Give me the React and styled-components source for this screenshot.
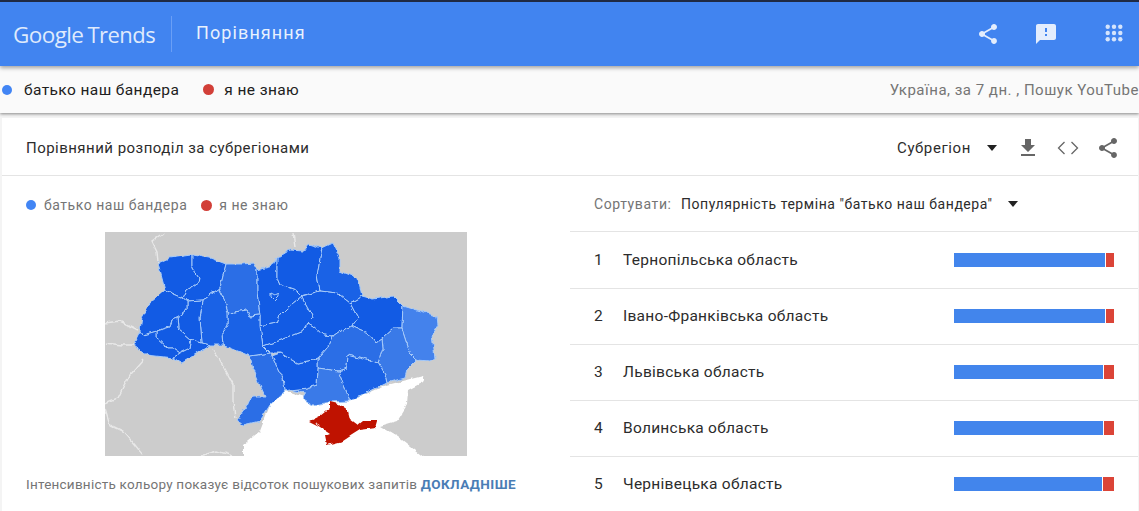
import React from "react";
import styled, { createGlobalStyle } from "styled-components";

const Global = createGlobalStyle`
  html, body { margin: 0; padding: 0; height: 511px; overflow: hidden; background: #f4f4f4; }
  body { font-family: Roboto, "Liberation Sans", sans-serif; }
`;

const Page = styled.div`
  width: 1139px;
  height: 511px;
  overflow: hidden;
  display: flex;
  flex-direction: column;
`;

const Header = styled.header`
  height: 64px;
  flex: none;
  border-top: 2px solid #1f2a44;
  background: #4184f0;
  display: flex;
  align-items: center;
  color: #e8f1fd;
  box-shadow: 0 2px 4px rgba(0, 0, 0, 0.35);
  position: relative;
  z-index: 2;
`;

const Logo = styled.div`
  width: 172px;
  height: 36px;
  flex: none;
  box-sizing: border-box;
  padding-left: 13px;
  display: flex;
  align-items: center;
  gap: 4px;
  border-right: 1px solid #6a9ff6;
  font-family: "Open Sans", sans-serif;
  font-size: 22.5px;
  letter-spacing: -0.6px;
  color: #dfeafc;
`;

const LogoTrends = styled.span`
  font-size: 22px;
  letter-spacing: -0.5px;
`;

const PageTitle = styled.div`
  margin-left: 24px;
  font-size: 18px;
  letter-spacing: 1.1px;
  flex: 1;
  margin-top: -3px;
`;

const HeaderIcons = styled.div`
  display: flex;
  align-items: center;
  margin-right: 13px;
  gap: 34px;
`;

const AppsSvg = styled.svg`
  margin-left: 10px;
  margin-top: -2px;
`;

const SubBar = styled.div`
  height: 47px;
  flex: none;
  box-sizing: border-box;
  background: #fafafa;
  display: flex;
  align-items: center;
  justify-content: space-between;
  box-shadow: 0 1px 3px rgba(0, 0, 0, 0.45);
  position: relative;
  z-index: 1;
  white-space: nowrap;
`;

const Terms = styled.div`
  display: flex;
  align-items: center;
  padding-left: 2px;
`;

const Dot = styled.span`
  width: ${(p) => p.$size}px;
  height: ${(p) => p.$size}px;
  flex: none;
  border-radius: 50%;
  background: ${(p) => (p.$red ? "#d23f38" : "#4285f4")};
  margin-right: ${(p) => p.$gap}px;
`;

const TermText = styled.span`
  font-size: 15.5px;
  color: #202020;
  letter-spacing: 0.4px;
  margin-right: ${(p) => p.$after}px;
`;

const Scope = styled.div`
  font-size: 15px;
  color: #757575;
  letter-spacing: 0.5px;
`;

const Card = styled.section`
  margin: 5px 1px 0 2px;
  flex: 1;
  background: #fff;
  min-height: 0;
  display: flex;
  flex-direction: column;
`;

const CardHead = styled.div`
  height: 58px;
  flex: none;
  box-sizing: border-box;
  border-bottom: 1px solid #e4e4e4;
  display: flex;
  align-items: center;
  padding: 3px 18px 0 24px;
`;

const CardTitle = styled.div`
  flex: 1;
  font-size: 15px;
  color: #2c2c2c;
  letter-spacing: 0.47px;
`;

const RegionLabel = styled.div`
  font-size: 15px;
  color: #2c2c2c;
  letter-spacing: 0.6px;
  margin-right: 16px;
`;

const Caret = styled.span`
  width: 0;
  height: 0;
  flex: none;
  border-left: 5.5px solid transparent;
  border-right: 5.5px solid transparent;
  border-top: 6px solid #222;
`;

const CardTools = styled.div`
  display: flex;
  align-items: center;
  margin-left: 19px;
  gap: 16px;
`;

const Body = styled.div`
  flex: 1;
  display: flex;
  min-height: 0;
`;

const Left = styled.div`
  width: 568px;
  flex: none;
  display: flex;
  flex-direction: column;
`;

const Legend = styled.div`
  display: flex;
  align-items: center;
  height: 56px;
  box-sizing: border-box;
  flex: none;
  padding: 2px 0 0 24px;
`;

const LegendText = styled.span`
  font-size: 14px;
  color: #757575;
  letter-spacing: 0.53px;
  margin-right: ${(p) => p.$after}px;
`;

const MapBox = styled.div`
  width: 362px;
  height: 224px;
  margin-left: 103px;
  flex: none;
`;

const Note = styled.div`
  margin: 20px 0 0 24px;
  font-size: 13.5px;
  color: #757575;
  letter-spacing: 0.24px;
  white-space: nowrap;
`;

const More = styled.span`
  color: #4a7db5;
  font-weight: 700;
  letter-spacing: 0.44px;
`;

const Right = styled.div`
  flex: 1;
  display: flex;
  flex-direction: column;
`;

const Sort = styled.div`
  height: 56px;
  flex: none;
  display: flex;
  align-items: center;
  padding: 1px 0 0 24px;
  box-sizing: border-box;
  border-bottom: 1px solid #e4e4e4;
`;

const SortLabel = styled.span`
  font-size: 14px;
  color: #757575;
  letter-spacing: 0.6px;
  width: 87px;
`;

const SortValue = styled.span`
  font-size: 14px;
  color: #2c2c2c;
  letter-spacing: 0.54px;
  margin-right: 16px;
`;

const Rows = styled.div`
  display: flex;
  flex-direction: column;
`;

const Row = styled.div`
  height: 56px;
  flex: none;
  box-sizing: border-box;
  display: flex;
  align-items: center;
  padding: 0 0 1px 24px;
  border-bottom: 1px solid #e4e4e4;
  &:first-child {
    height: 57px;
    padding-bottom: 0;
  }
`;

const Rank = styled.span`
  width: 29px;
  font-size: 15.5px;
  color: #2c2c2c;
`;

const RowName = styled.span`
  flex: 1;
  font-size: 15.5px;
  color: #2c2c2c;
  letter-spacing: 0.27px;
`;

const Bar = styled.div`
  width: 160px;
  height: 14px;
  margin-right: 24px;
  flex: none;
  display: flex;
  gap: 1px;
`;

const BarPart = styled.div`
  background: ${(p) => (p.$red ? "#db4437" : "#4285ec")};
`;

const Ic = ({ d, size = 24, fill }) => (
  <svg width={size} height={size} viewBox="0 0 24 24" fill={fill}>
    <path d={d} />
  </svg>
);

const SHARE =
  "M18 16.08c-.76 0-1.44.3-1.96.77L8.91 12.7c.05-.23.09-.46.09-.7s-.04-.47-.09-.7l7.05-4.11c.54.5 1.25.81 2.04.81 1.66 0 3-1.34 3-3s-1.34-3-3-3-3 1.34-3 3c0 .24.04.47.09.7L8.04 9.81C7.5 9.31 6.79 9 6 9c-1.66 0-3 1.34-3 3s1.34 3 3 3c.79 0 1.5-.31 2.04-.81l7.12 4.16c-.05.21-.08.43-.08.65 0 1.61 1.31 2.92 2.92 2.92 1.61 0 2.92-1.31 2.92-2.92s-1.31-2.92-2.92-2.92z";
const FEEDBACK =
  "M20 2H4c-1.1 0-1.99.9-1.99 2L2 22l4-4h14c1.1 0 2-.9 2-2V4c0-1.1-.9-2-2-2zm-7 12h-2v-2h2v2zm0-4h-2V6h2v4z";
const DOWNLOAD = "M19 9h-4V3H9v6H5l7 7 7-7zM5 18v2h14v-2H5z";

const AppsIcon = () => (
  <AppsSvg width="24" height="24" viewBox="0 0 24 24" fill="#d5e4fc">
    {[5.7, 12, 18.3].flatMap((y) =>
      [5.7, 12, 18.3].map((x) => <circle key={`${x}-${y}`} cx={x} cy={y} r="2.2" />)
    )}
  </AppsSvg>
);

const CodeIcon = () => (
  <svg width="24" height="24" viewBox="0 0 24 24" fill="none" stroke="#666" strokeWidth="1.3">
    <path d="M8.5 6 2.5 12l6 6M15.5 6l6 6-6 6" />
  </svg>
);

const D = "#125be4";
const M = "#1a62e6";
const L = "#2b6ee6";
const LL = "#3a7ae8";
const XL = "#4482ec";

const REGIONS = [
  [D, "158,263 170,258 192,255 192,268 199,278 198,283 187,290 183,298 165,290"],
  [D, "192,255 210,258 226,264 220,288 203,300 187,301 183,298 187,290 198,283 199,278 192,268"],
  [L, "226,264 243,264 253,263 257,270 257,291 260,315 250,316 247,310 228,313 225,301 219,290 220,288"],
  [D, "257,270 273,266 277,258 277,271 277,278 280,285 297,291 302,296 287,308 280,315 277,323 260,326 260,315 257,291"],
  [D, "277,258 290,250 303,251 308,244 322,248 317,275 320,291 302,296 297,291 280,285 277,278 277,271"],
  [M, "322,248 333,243 340,258 340,271 358,278 362,296 350,303 337,293 320,291 317,275"],
  [D, "302,296 320,291 337,293 350,303 358,318 352,326 340,331 333,336 323,335 313,326 308,323 313,318 302,298"],
  [D, "350,303 362,296 373,299 393,296 403,306 402,328 393,328 382,338 375,343 368,333 352,326 358,318"],
  [XL, "403,306 437,316 438,325 432,335 435,358 430,361 417,360 410,353 402,328"],
  [LL, "402,328 410,353 417,360 407,370 405,378 387,383 385,375 378,363 383,348 382,338 393,328"],
  [L, "340,331 352,326 368,333 375,343 382,338 383,348 378,363 348,355 347,368 338,371 318,368 318,358 327,348 333,336"],
  [M, "347,368 348,355 378,363 385,375 387,383 350,401 345,388 338,371"],
  [LL, "318,368 338,371 345,388 350,401 330,402 313,405 302,398 305,393 290,390 307,388 317,385"],
  [D, "272,356 280,353 297,363 313,360 318,358 318,368 317,385 307,388 290,390 285,391 283,378"],
  [L, "250,356 270,353 272,356 283,378 285,391 270,405 260,421 243,425 237,420 248,405 252,396 265,396 260,385 253,368"],
  [D, "263,346 280,340 303,331 308,323 313,326 323,335 333,336 327,348 318,358 313,360 297,363 280,353 270,353"],
  [D, "260,326 277,323 280,315 287,308 302,296 302,298 313,318 308,323 303,331 280,340 263,346"],
  [M, "228,313 247,310 250,316 260,315 260,326 263,346 270,353 250,356 223,345 222,335 228,325"],
  [M, "203,300 220,288 219,290 225,301 228,313 228,325 222,335 223,345 210,345 202,343 200,318"],
  [D, "187,301 203,300 200,318 202,343 192,340 178,328 177,318 187,310"],
  [D, "165,290 183,298 187,301 187,310 177,318 172,320 170,327 157,331 143,335 140,331 142,318 150,303"],
  [D, "157,331 170,327 172,320 177,318 178,328 192,340 190,348 180,353 173,348 168,348 157,338"],
  [D, "140,331 143,335 157,331 157,338 168,348 173,348 180,353 173,358 147,355 133,345"],
  [D, "180,353 190,348 192,340 202,343 210,345 193,356 182,363 173,358"],
];

const BORDERS = [
  "163,233 152,241 157,251 158,263",
  "212,348 224,368 233,385 233,400 235,418",
  "105,323 120,321 138,330",
  "105,343 123,345 133,345",
  "143,360 130,375 123,388 118,398 105,403",
  "105,408 110,425 123,431 135,445 143,455",
  "200,456 217,451 233,456",
  "293,233 295,246",
];

const UkraineMap = () => (
  <svg width="362" height="224" viewBox="105 232 362 224">
    <defs>
      <filter id="rough" x="105" y="232" width="362" height="224" filterUnits="userSpaceOnUse" colorInterpolationFilters="sRGB">
        <feTurbulence type="fractalNoise" baseFrequency="0.13" numOctaves="2" seed="4" result="n" />
        <feDisplacementMap in="SourceGraphic" in2="n" scale="5" xChannelSelector="R" yChannelSelector="G" />
        <feGaussianBlur stdDeviation="0.3" />
      </filter>
    </defs>
    <rect x="105" y="232" width="362" height="224" fill="#cccccc" />
    <g filter="url(#rough)">
      <polygon
        fill="#fff"
        points="243,458 243,445 260,431 270,405 285,391 313,400 350,401 387,385 423,376 425,381 408,390 407,405 397,421 380,426 397,436 425,458"
      />
      {BORDERS.map((p) => (
        <polyline key={p} points={p} fill="none" stroke="#e8e8e8" strokeWidth="1.4" />
      ))}
      {REGIONS.map(([fill, p]) => (
        <polygon key={p} points={p} fill={fill} stroke="#a6caf9" strokeWidth="1" strokeLinejoin="round" />
      ))}
      <polygon points="271,293 275,295 279,293 279,297 275,301 271,297" fill={D} stroke="#a6caf9" strokeWidth="1" />
      <polygon
        fill="#bf1200"
        points="330,402 338,404 348,411 350,419 358,425 363,421 377,421 375,428 360,430 352,435 343,441 335,443 327,445 325,435 330,433 318,425 310,421 320,416 330,408"
      />
    </g>
  </svg>
);

const rows = [
  ["Тернопільська область", 151, 8],
  ["Івано-Франківська область", 151, 8],
  ["Львівська область", 149, 10],
  ["Волинська область", 149, 10],
  ["Чернівецька область", 148, 11],
];

export default function App() {
  return (
    <Page>
      <Global />
      <Header>
        <Logo>
          <span>Google</span>
          <LogoTrends>Trends</LogoTrends>
        </Logo>
        <PageTitle>Порівняння</PageTitle>
        <HeaderIcons>
          <Ic d={SHARE} fill="#e3edfd" />
          <Ic d={FEEDBACK} fill="#e3edfd" />
          <AppsIcon />
        </HeaderIcons>
      </Header>
      <SubBar>
        <Terms>
          <Dot $size={10} $gap={12} />
          <TermText $after={24}>батько наш бандера</TermText>
          <Dot $red $size={11} $gap={10} />
          <TermText $after={0}>я не знаю</TermText>
        </Terms>
        <Scope>Україна, за 7 дн. , Пошук YouTube</Scope>
      </SubBar>
      <Card>
        <CardHead>
          <CardTitle>Порівняний розподіл за субрегіонами</CardTitle>
          <RegionLabel>Субрегіон</RegionLabel>
          <Caret />
          <CardTools>
            <Ic d={DOWNLOAD} fill="#666" />
            <CodeIcon />
            <Ic d={SHARE} fill="#666" />
          </CardTools>
        </CardHead>
        <Body>
          <Left>
            <Legend>
              <Dot $size={10} $gap={8} />
              <LegendText $after={14}>батько наш бандера</LegendText>
              <Dot $red $size={11} $gap={7} />
              <LegendText $after={0}>я не знаю</LegendText>
            </Legend>
            <MapBox>
              <UkraineMap />
            </MapBox>
            <Note>
              Інтенсивність кольору показує відсоток пошукових запитів <More>ДОКЛАДНІШЕ</More>
            </Note>
          </Left>
          <Right>
            <Sort>
              <SortLabel>Сортувати:</SortLabel>
              <SortValue>Популярність терміна "батько наш бандера"</SortValue>
              <Caret />
            </Sort>
            <Rows>
              {rows.map(([name, a, b], i) => (
                <Row key={name}>
                  <Rank>{i + 1}</Rank>
                  <RowName>{name}</RowName>
                  <Bar>
                    <BarPart style={{ width: a }} />
                    <BarPart $red style={{ width: b }} />
                  </Bar>
                </Row>
              ))}
            </Rows>
          </Right>
        </Body>
      </Card>
    </Page>
  );
}
